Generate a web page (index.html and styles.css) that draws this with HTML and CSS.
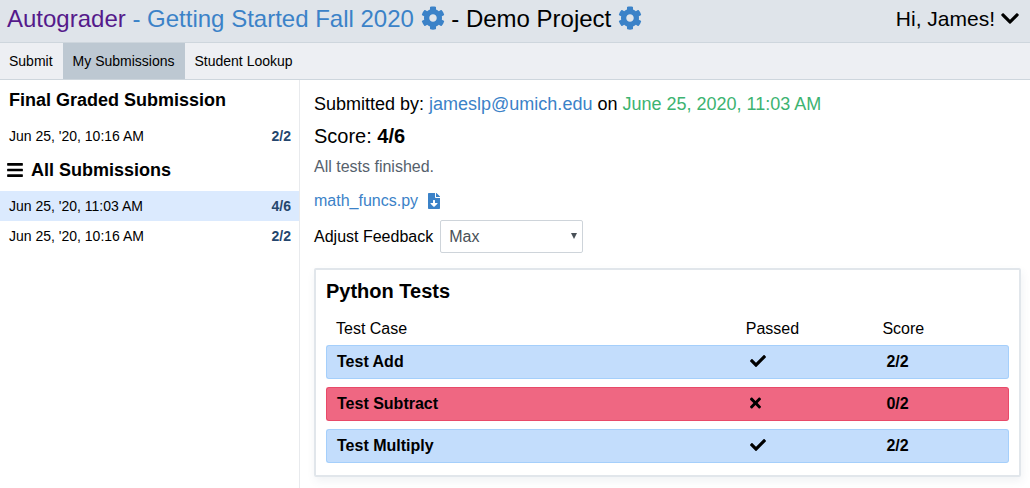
FILE: index.html
```html
<!DOCTYPE html>
<html lang="en">
<head>
<meta charset="utf-8">
<title>Autograder - Demo Project</title>
<link rel="stylesheet" href="styles.css">
</head>
<body>
<svg class="sprite" aria-hidden="true">
  <symbol id="cog" viewBox="0 0 512 512"><path d="M487.4 315.7l-42.6-24.6c4.3-23.2 4.3-47 0-70.2l42.6-24.6c4.9-2.8 7.1-8.6 5.5-14-11.1-35.6-30-67.8-54.7-94.6-3.8-4.1-10-5.1-14.8-2.3L380.8 110c-17.9-15.4-38.5-27.3-60.8-35.1V25.8c0-5.6-3.9-10.5-9.4-11.7-36.7-8.2-74.3-7.8-109.2 0-5.5 1.2-9.4 6.1-9.4 11.7V75c-22.2 7.9-42.8 19.8-60.8 35.1L88.7 85.5c-4.9-2.8-11-1.9-14.8 2.3-24.7 26.7-43.6 58.9-54.7 94.6-1.7 5.4.6 11.2 5.5 14L67.3 221c-4.3 23.2-4.3 47 0 70.2l-42.6 24.6c-4.9 2.8-7.1 8.6-5.5 14 11.1 35.6 30 67.8 54.7 94.6 3.8 4.1 10 5.1 14.8 2.3l42.6-24.6c17.9 15.4 38.5 27.3 60.8 35.1v49.2c0 5.6 3.9 10.5 9.4 11.7 36.7 8.2 74.3 7.8 109.2 0 5.5-1.2 9.4-6.1 9.4-11.7v-49.2c22.2-7.9 42.8-19.8 60.8-35.1l42.6 24.6c4.9 2.8 11 1.9 14.8-2.3 24.7-26.7 43.6-58.9 54.7-94.6 1.5-5.5-.7-11.3-5.6-14.1zM256 336c-44.1 0-80-35.9-80-80s35.9-80 80-80 80 35.9 80 80-35.9 80-80 80z"/></symbol>
  <symbol id="check" viewBox="0 0 512 512"><path d="M173.9 439.4l-166.4-166.4c-10-10-10-26.2 0-36.2l36.2-36.2c10-10 26.2-10 36.2 0L192 312.7 432.1 72.6c10-10 26.2-10 36.2 0l36.2 36.2c10 10 10 26.2 0 36.2L210.1 439.4c-10 10-26.2 10-36.2 0z"/></symbol>
  <symbol id="times" viewBox="0 0 352 512"><path d="M242.7 256l100.1-100.1c12.3-12.3 12.3-32.2 0-44.5l-22.2-22.2c-12.3-12.3-32.2-12.3-44.5 0L176 189.3 75.9 89.2c-12.3-12.3-32.2-12.3-44.5 0L9.2 111.5c-12.3 12.3-12.3 32.2 0 44.5L109.3 256 9.2 356.1c-12.3 12.3-12.3 32.2 0 44.5l22.2 22.2c12.3 12.3 32.2 12.3 44.5 0L176 322.7l100.1 100.1c12.3 12.3 32.2 12.3 44.5 0l22.2-22.2c12.3-12.3 12.3-32.2 0-44.5L242.7 256z"/></symbol>
</svg>
<header class="topbar">
  <h1 class="title"><a class="home" href="#">Autograder</a><a class="link" href="#"> - Getting Started Fall 2020</a> <a class="link" href="#" aria-label="Course settings"><svg class="cog"><use href="#cog"/></svg></a> - Demo Project <a class="link" href="#" aria-label="Project settings"><svg class="cog"><use href="#cog"/></svg></a></h1>
  <button class="user" type="button">Hi, James!
    <svg class="chevron" viewBox="0 0 448 512" aria-hidden="true"><path d="M207 381.5L12.700 187.100c-9.400-9.400-9.400-24.600 0-33.900l22.700-22.700c9.400-9.400 24.500-9.400 33.900 0L224 284.500l154.700-154c9.400-9.300 24.500-9.300 33.900 0l22.700 22.700c9.400 9.400 9.400 24.600 0 33.900L241 381.500c-9.400 9.400-24.600 9.400-34 0z"/></svg>
  </button>
</header>
<nav class="tabs">
  <button class="tab" type="button">Submit</button>
  <button class="tab active" type="button">My Submissions</button>
  <button class="tab" type="button">Student Lookup</button>
</nav>
<div class="body">
  <aside class="sidebar">
    <h2 class="side-title">Final Graded Submission</h2>
    <button class="submission" type="button"><span>Jun 25, '20, 10:16 AM</span><b class="points">2/2</b></button>
    <h2 class="side-title all"><svg class="bars" viewBox="0 0 448 512" aria-hidden="true"><rect y="60" width="448" height="72" rx="16"/><rect y="220" width="448" height="72" rx="16"/><rect y="380" width="448" height="72" rx="16"/></svg>All Submissions</h2>
    <button class="submission selected" type="button"><span>Jun 25, '20, 11:03 AM</span><b class="points">4/6</b></button>
    <button class="submission" type="button"><span>Jun 25, '20, 10:16 AM</span><b class="points">2/2</b></button>
  </aside>
  <main class="detail">
    <p class="submitted">Submitted by: <span class="email">jameslp@umich.edu</span> on <span class="date">June 25, 2020, 11:03 AM</span></p>
    <p class="score">Score: <b>4/6</b></p>
    <p class="status">All tests finished.</p>
    <p class="file"><a class="link" href="#">math_funcs.py</a><a class="link download" href="#" aria-label="Download math_funcs.py"><svg class="file-icon" viewBox="0 0 384 512"><path d="M224 136V0H24C10.700 0 0 10.700 0 24v464c0 13.300 10.700 24 24 24h336c13.300 0 24-10.700 24-24V160H248c-13.200 0-24-10.800-24-24zm76.450 211.360l-96.420 95.700c-6.650 6.610-17.390 6.610-24.040 0l-96.420-95.700C73.420 337.290 80.540 320 94.820 320H160v-80c0-8.840 7.160-16 16-16h32c8.840 0 16 7.160 16 16v80h65.180c14.280 0 21.400 17.290 11.270 27.360zM377 105L279.100 7c-4.500-4.500-10.600-7-17-7H256v128h128v-6.100c0-6.300-2.500-12.400-7-16.900z"/></svg></a></p>
    <div class="feedback">
      <label for="feedback">Adjust Feedback</label>
      <span class="select-wrap"><select id="feedback" class="select"><option>Max</option></select></span>
    </div>
    <section class="suite">
      <h2 class="suite-title">Python Tests</h2>
      <table class="tests">
        <thead><tr><th class="name">Test Case</th><th class="passed">Passed</th><th>Score</th></tr></thead>
        <tbody>
          <tr class="pass"><td>Test Add</td><td><svg class="check" role="img" aria-label="Yes"><use href="#check"/></svg></td><td>2/2</td></tr>
          <tr class="fail"><td>Test Subtract</td><td><svg class="times" role="img" aria-label="No"><use href="#times"/></svg></td><td>0/2</td></tr>
          <tr class="pass"><td>Test Multiply</td><td><svg class="check" role="img" aria-label="Yes"><use href="#check"/></svg></td><td>2/2</td></tr>
        </tbody>
      </table>
    </section>
  </main>
</div>
</body>
</html>
```
FILE: styles.css
```css
* { box-sizing: border-box; }
body {
  margin: 0;
  min-height: 100vh;
  display: flex;
  flex-direction: column;
  font-family: "Liberation Sans", Arial, sans-serif;
  font-size: 16px;
  color: #000;
  background: #fff;
}
h1, h2, p { margin: 0; }
button { font: inherit; color: inherit; border: 0; background: none; cursor: pointer; }
a { text-decoration: none; }
svg { fill: currentColor; }
.sprite { display: none; }
.link, .email { color: #3b82c8; }

.topbar {
  display: flex;
  justify-content: space-between;
  align-items: center;
  height: 43px;
  padding: 0 11px 5px 7px;
  background: #dfe4ea;
  border-bottom: 1px solid #ced6dd;
}
.title { font-size: 24px; font-weight: 400; line-height: 36px; }
.home { color: #551a8b; }
.cog { width: 24px; height: 24px; vertical-align: -3px; }
.user { display: flex; align-items: center; gap: 6px; padding: 0; font-size: 21px; line-height: 24px; }
.chevron { width: 18px; height: 21px; }

.tabs {
  display: flex;
  height: 37px;
  background: #edeff3;
  border-bottom: 1px solid #ced6dd;
}
.tab { padding: 0 10px; font-size: 14px; }
.tab:first-child { padding-left: 9px; }
.tab.active { background: #bdc8d2; }

.body { display: flex; flex: 1; }
.sidebar { flex: 0 0 300px; padding-top: 1px; border-right: 1px solid #e8eaed; }
.side-title { margin-bottom: 2px; padding: 0 9px; font-size: 18px; line-height: 38px; }
.side-title.all { display: flex; align-items: center; gap: 8px; padding: 0 7px; }
.bars { width: 16px; height: 18px; }
.submission {
  display: flex;
  justify-content: space-between;
  align-items: center;
  width: 100%;
  height: 30px;
  padding: 0 8px 0 9px;
  font-size: 14px;
}
.submission.selected { background: #dbeafe; }
.points { color: #24466d; }

.detail { flex: 1; padding: 13px 9px 11px 14px; }
.submitted { font-size: 18px; line-height: 22px; }
.date { color: #3cb371; }
.score { margin-top: 10px; font-size: 20px; line-height: 23px; }
.status { margin-top: 9px; line-height: 20px; color: #56616c; }
.file { display: flex; align-items: center; gap: 10px; margin-top: 14px; line-height: 20px; }
.download { display: flex; }
.file-icon { width: 12px; height: 16px; }
.feedback { display: flex; align-items: center; gap: 7px; margin-top: 9px; }
.select-wrap { position: relative; }
.select-wrap::after {
  content: "";
  position: absolute;
  right: 6px;
  top: 13px;
  border: 3px solid transparent;
  border-top: 6px solid #495057;
  border-bottom: 0;
  pointer-events: none;
}
.select {
  display: block;
  width: 143px;
  height: 33px;
  padding: 0 8px;
  appearance: none;
  font: inherit;
  color: #495057;
  background: #fff;
  border: 1px solid #ced4da;
  border-radius: 2px;
}

.suite {
  margin-top: 15px;
  padding: 10px 10px 4px;
  border: 2px solid #e1e6eb;
  border-radius: 2px;
  box-shadow: 1px 4px 8px rgba(60, 90, 120, 0.08);
}
.suite-title { margin-bottom: 10px; font-size: 20px; line-height: 23px; }
.tests { width: 100%; border-collapse: separate; border-spacing: 0 8px; table-layout: fixed; }
.tests th, .tests td { text-align: left; padding: 0 10px; }
.tests thead th { font-weight: 400; height: 16px; line-height: 16px; }
.tests .name { width: 60%; }
.tests .passed { width: 20%; }
.tests td { height: 34px; font-weight: 700; border: 1px solid; border-width: 1px 0; }
.tests td:first-child { border-left-width: 1px; border-radius: 3px 0 0 3px; }
.tests td:last-child { border-right-width: 1px; border-radius: 0 3px 3px 0; }
.tests td + td { padding-left: 14px; }
.pass td { background: #c3ddfc; border-color: #a5cffb; }
.fail td { background: #ef6782; border-color: #e84a69; }
.check { display: block; width: 16px; height: 16px; margin-bottom: 2px; }
.times { display: block; width: 11px; height: 16px; margin-bottom: 2px; }
```
